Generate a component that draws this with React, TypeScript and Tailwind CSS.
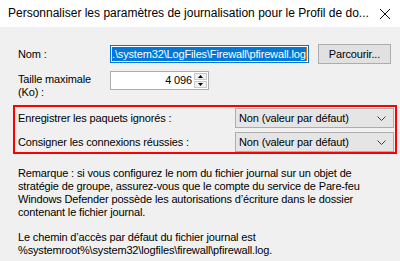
import React from "react";

function Chevron() {
  return (
    <svg width="9" height="5" viewBox="0 0 9 5" className="shrink-0">
      <path d="M0.5 0.5 L4.5 4.5 L8.5 0.5" fill="none" stroke="#404040" strokeWidth="1" />
    </svg>
  );
}

function Dropdown({ value }: { value: string }) {
  return (
    <div className="flex items-center justify-between w-[159px] h-[20px] bg-[#e5e5e5] border border-[#adadad] pl-[3px] pr-[7px]">
      <span>{value}</span>
      <Chevron />
    </div>
  );
}

export default function App() {
  const font = { fontFamily: '"Liberation Sans", Arial, sans-serif' };

  return (
    <div className="w-[400px] h-[261px] overflow-hidden bg-[#f0f0f0] text-[11px] leading-[13px] tracking-[-0.15px] text-black" style={font}>
      {/* Title bar */}
      <div className="h-[27px] bg-white flex items-center justify-between pl-[8px] pr-[10px] tracking-normal">
        <span className="text-[12px] whitespace-nowrap">Personnaliser les paramètres de journalisation pour le Profil de do...</span>
        <svg width="10" height="10" viewBox="0 0 10 10" className="shrink-0">
          <path d="M0 0 L10 10 M10 0 L0 10" stroke="#111" strokeWidth="1" />
        </svg>
      </div>

      <div className="pl-[18px]">
        {/* Nom */}
        <div className="flex items-center h-[20px] mt-[17px]">
          <span className="w-[92px]">Nom :</span>
          <div className="w-[199px] h-[18px] border border-[#0078d7] bg-white p-[1px] flex items-stretch overflow-hidden">
            <span className="bg-[#0078d7] text-white whitespace-nowrap leading-[14px]">.\system32\LogFiles\Firewall\pfirewall.log</span>
            <span className="w-[1px] shrink-0 bg-[#e8700a]" />
          </div>
          <button className="ml-[9px] w-[73px] h-[20px] bg-[#e1e1e1] border border-[#adadad] text-[11px] leading-[13px]">
            Parcourir...
          </button>
        </div>

        {/* Taille maximale */}
        <div className="flex items-start mt-[7px]">
          <div className="w-[92px] pt-[2px]">
            Taille maximale
            <br />
            (Ko) :
          </div>
          <div className="w-[99px] h-[19px] border border-[#adadad] bg-white flex">
            <span className="flex-1 text-right pr-[1px] leading-[17px]">4 096</span>
            <div className="w-[15px] flex flex-col gap-[1px] p-[1px]">
              <div className="flex-1 bg-[#f0f0f0] border border-[#c9c9c9] flex items-center justify-center">
                <svg width="5" height="3" viewBox="0 0 5 3">
                  <path d="M2.5 0 L5 3 L0 3 Z" fill="#000" />
                </svg>
              </div>
              <div className="flex-1 bg-[#f0f0f0] border border-[#c9c9c9] flex items-center justify-center">
                <svg width="5" height="3" viewBox="0 0 5 3">
                  <path d="M0 0 L5 0 L2.5 3 Z" fill="#000" />
                </svg>
              </div>
            </div>
          </div>
        </div>

        {/* Highlighted options */}
        <div className="ml-[-5px] mt-[6px] w-[384px] border-2 border-[#ff0000] pt-[1px] pl-[3px] flex flex-col gap-[4px]">
          <div className="flex items-center">
            <span className="w-[217px]">Enregistrer les paquets ignorés :</span>
            <Dropdown value="Non (valeur par défaut)" />
          </div>
          <div className="flex items-center">
            <span className="w-[217px]">Consigner les connexions réussies :</span>
            <Dropdown value="Non (valeur par défaut)" />
          </div>
        </div>

        {/* Remarks */}
        <p className="mt-[13px] whitespace-nowrap">
          Remarque : si vous configurez le nom du fichier journal sur un objet de
          <br />
          stratégie de groupe, assurez-vous que le compte du service de Pare-feu
          <br />
          Windows Defender possède les autorisations d’écriture dans le dossier
          <br />
          contenant le fichier journal.
        </p>
        <p className="mt-[12px] whitespace-nowrap">
          Le chemin d’accès par défaut du fichier journal est
          <br />
          %systemroot%\system32\logfiles\firewall\pfirewall.log.
        </p>
      </div>
    </div>
  );
}
